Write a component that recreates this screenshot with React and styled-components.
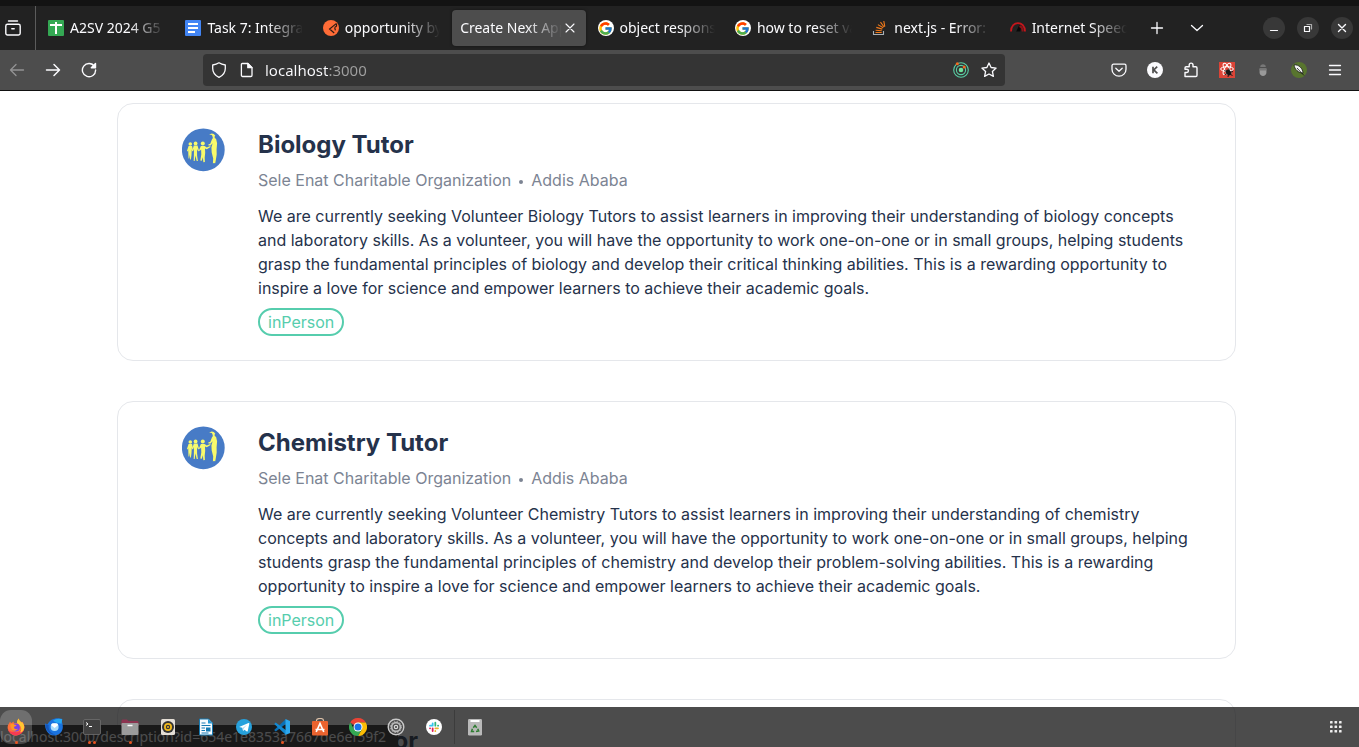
import React from "react";
import styled, { createGlobalStyle, css } from "styled-components";
import { FcGoogle } from "react-icons/fc";

const GlobalStyle = createGlobalStyle`
  *, *::before, *::after { box-sizing: border-box; }
  body { margin: 0; background: #fff; overflow: hidden; }
  button { border: 0; padding: 0; background: none; color: inherit; font: inherit; cursor: pointer; }
  h2, p, ul { margin: 0; padding: 0; }
  svg { display: block; flex: none; }
`;

const uiFont = `"Noto Sans", "Open Sans", sans-serif`;

/* ---------- window shell ---------- */

const Window = styled.div`
  position: relative;
  display: flex;
  flex-direction: column;
  height: 100vh;
  overflow: hidden;
  font-family: ${uiFont};
`;

const SystemBar = styled.div`
  flex: none;
  height: 6px;
  background: #131313;
`;

const TabStrip = styled.header`
  flex: none;
  display: flex;
  align-items: stretch;
  height: 44px;
  background: #222;
  color: #fbfbfe;
`;

const ViewButton = styled.button`
  width: 36px;
  padding-left: 5px;
  border-right: 1px solid #5c5c5c;
`;

const TabList = styled.div`
  flex: 1;
  min-width: 0;
  display: flex;
  padding-left: 2px;
`;

const Tab = styled.div`
  flex: 1 1 0;
  min-width: 0;
  display: flex;
  align-items: center;
  margin: 4px 2px;
  padding: 0 8px;
  border-radius: 4px;
  ${(p) => p.$active && css`
    background: #4d4d4d;
    box-shadow: 0 0 3px rgba(0, 0, 0, 0.5);
  `}
`;

const TabButton = styled.button`
  flex: 1;
  min-width: 0;
  display: flex;
  align-items: center;
  gap: 6px;
  font-size: 14px;
  line-height: 22px;
`;

const TabTitle = styled.span`
  flex: 1;
  min-width: 0;
  overflow: hidden;
  white-space: nowrap;
  text-align: left;
  mask-image: linear-gradient(to left, transparent, #000 36px);
`;

const StripAction = styled.button`
  display: grid;
  place-items: center;
  width: 40px;
`;

const WindowControls = styled.div`
  display: flex;
  align-items: center;
  gap: 12px;
  margin-left: 46px;
  padding-right: 6px;
`;

const WindowButton = styled.button`
  display: grid;
  place-items: center;
  width: 22px;
  height: 22px;
  border-radius: 50%;
  background: #383838;
`;

/* ---------- navigation bar ---------- */

const NavBar = styled.nav`
  flex: none;
  display: flex;
  align-items: center;
  height: 41px;
  background: #4d4d4d;
  border-bottom: 1px solid #111;
  color: #fbfbfe;
`;

const ToolGroup = styled.div`
  display: flex;
  gap: 2px;
  padding-right: ${(p) => (p.$end ? 7 : 0)}px;
`;

const ToolButton = styled.button`
  display: grid;
  place-items: center;
  width: 34px;
  height: 32px;
  opacity: ${(p) => (p.$dim ? 0.4 : 1)};
`;

const AddressBar = styled.div`
  flex: 1;
  min-width: 0;
  display: flex;
  align-items: center;
  height: 32px;
  margin: 0 97px;
  padding: 0 2px;
  border-radius: 4px;
  background: #343434;
`;

const AddressIcon = styled.button`
  display: grid;
  place-items: center;
  width: 28px;
  height: 28px;
`;

const AddressInput = styled.input`
  flex: 1;
  min-width: 0;
  border: 0;
  outline: 0;
  padding: 0 4px;
  font: 15px/22px ${uiFont};
  color: transparent;
  background: linear-gradient(to right, #fbfbfe 67px, #a0a0a0 67px);
  background-clip: text;
`;

/* ---------- page content ---------- */

const Page = styled.main`
  flex: 1;
  min-height: 0;
  overflow: hidden;
  display: flex;
  flex-direction: column;
  gap: 40px;
  padding: 12px 123px 0 117px;
  background: #fff;
  font-family: Inter, sans-serif;
  color: #25324b;
`;

const Card = styled.article`
  flex: none;
  display: flex;
  align-items: flex-start;
  gap: 32px;
  padding: 24px 36px 24px 64px;
  border: 1px solid #e5e7eb;
  border-radius: 16px;
`;

const CardBody = styled.div`
  flex: 1;
  min-width: 0;
`;

const Title = styled.h2`
  font-size: 24px;
  line-height: 34px;
  font-weight: 700;
`;

const Meta = styled.div`
  display: flex;
  align-items: center;
  gap: 8px;
  margin-top: 6px;
  font-size: 16px;
  line-height: 24px;
  color: #7c8493;
`;

const Dot = styled.span`
  width: 4px;
  height: 4px;
  margin-top: 4px;
  border-radius: 50%;
  background: #7c8493;
`;

const Description = styled.p`
  margin-top: 12px;
  font-size: 16px;
  line-height: 24px;
`;

const Badge = styled.span`
  display: block;
  width: fit-content;
  margin-top: 8px;
  padding: 0 8px;
  border: 2px solid #56cdad;
  border-radius: 14px;
  font-size: 16px;
  line-height: 24px;
  color: #56cdad;
`;

/* ---------- link status and dock, both over the page ---------- */

const LinkStatus = styled.div`
  position: absolute;
  left: 0;
  bottom: 0;
  height: 22px;
  padding-right: 12px;
  border-top-right-radius: 4px;
  background: #2b2b2b;
  color: #fbfbfe;
  font-size: 14px;
  line-height: 24px;
  white-space: nowrap;
`;

const Dock = styled.footer`
  position: absolute;
  inset: auto 0 0 0;
  display: flex;
  align-items: center;
  height: 40px;
  background: rgba(20, 20, 20, 0.76);
`;

const DockGroup = styled.div`
  display: flex;
  gap: 6px;
`;

const TrashGroup = styled.div`
  margin-left: 4px;
  padding-left: 4px;
  border-left: 1px solid #3c3c3c;
`;

const DockItem = styled.button`
  position: relative;
  display: grid;
  place-items: center;
  width: 32px;
  height: 34px;
  border-radius: 11px;
  background: ${(p) => (p.$focused ? "rgba(255,255,255,.2)" : "none")};
`;

const Running = styled.span`
  position: absolute;
  inset: auto 0 0 0;
  display: flex;
  justify-content: center;
  gap: 2px;
`;

const RunningDot = styled.i`
  width: 3px;
  height: 3px;
  border-radius: 50%;
  background: #e95420;
`;

const AppsButton = styled.button`
  display: grid;
  place-items: center;
  width: 32px;
  height: 34px;
  margin-left: auto;
  margin-right: 7px;
`;

/* ---------- icons ---------- */

const Line = ({ size = 16, w = 1.3, children }) => (
  <svg width={size} height={size} viewBox="0 0 16 16" fill="none" stroke="currentColor"
    strokeWidth={w} strokeLinecap="round" strokeLinejoin="round" aria-hidden="true">
    {children}
  </svg>
);

const Art = ({ size = 16, box = 16, children }) => (
  <svg width={size} height={size} viewBox={`0 0 ${box} ${box}`} aria-hidden="true">{children}</svg>
);

const SheetsIcon = () => (
  <Art><rect width="16" height="16" rx="1" fill="#34a853" />
    <path d="M2 5h12M8 2v12" stroke="#fff" strokeWidth="2" /></Art>
);
const DocsIcon = () => (
  <Art><rect width="16" height="16" rx="1" fill="#4285f4" />
    <path d="M3 4h10M3 8h10M3 12h7" stroke="#fff" strokeWidth="2" /></Art>
);
const PostmanIcon = () => (
  <Art>
    <circle cx="8" cy="8" r="8" fill="#ff6c37" />
    <path d="M13.2 3.6L6.6 9l4.6 4M11.8 7.2c1.6-.2 2.4-1.600 1.400-3.600M11.600 7.400l.8 3" fill="none" stroke="#2b1a14" strokeWidth="1.200" />
  </Art>
);
const GoogleBadge = styled.span`
  display: grid;
  place-items: center;
  flex: none;
  width: 16px;
  height: 16px;
  border-radius: 50%;
  background: #fff;
`;
const GoogleIcon = () => <GoogleBadge><FcGoogle size={15} /></GoogleBadge>;
const StackIcon = () => (
  <Art>
    <path d="M1.500 11v3.500h10V11" fill="none" stroke="#a9b0b5" strokeWidth="1.100" />
    <path d="M3.500 12.500h6.200M3.600 10.200l6.200.6M4.300 7.400l6 1.700M5.900 4.600l5.300 3.200M8.500 2.200l3.600 4.800M11.800 1l1 5.600" stroke="#f27a1a" strokeWidth="1.100" />
  </Art>
);
const SpeedIcon = () => (
  <Art>
    <path d="M1 11.500C1 .3 15 .3 15 11.500" fill="none" stroke="#c4161c" strokeWidth="1.800" />
    <path d="M6.200 11.600L9.400 4.800l1.500.6-.5 6.200z" fill="#080808" />
    <path d="M9.500 6c2.200.8 3.200 3 3.200 5.500" fill="none" stroke="#8d1216" strokeWidth="2" />
  </Art>
);

const ReactToolsIcon = () => (
  <Art>
    <g fill="none" stroke="#58cfa4" strokeWidth="1.100"><circle cx="8" cy="8" r="7.300" /><circle cx="8" cy="8" r="4.600" /></g>
    <circle cx="8" cy="8" r="2.300" fill="#6fe39c" />
    <circle cx="4.300" cy="1.700" r="1.500" fill="#f36b21" /><circle cx="11.200" cy="5" r="1.500" fill="#f36b21" />
  </Art>
);
const AccountIcon = () => (
  <Art><circle cx="8" cy="8" r="8" fill="#fbfbfe" />
    <path d="M6 4.700v6.600M10.200 4.700L6.800 8l3.600 3.300" stroke="#4d4d4d" strokeWidth="1.700" fill="none" /></Art>
);
const BugIcon = () => (
  <Art>
    <rect width="16" height="16" fill="#dc4437" />
    <g fill="none" stroke="#fff" strokeWidth="1">
      <ellipse cx="8" cy="7" rx="6.400" ry="2.300" />
      <ellipse cx="8" cy="7" rx="6.400" ry="2.300" transform="rotate(60 8 7)" />
      <ellipse cx="8" cy="7" rx="6.400" ry="2.300" transform="rotate(120 8 7)" />
    </g>
    <ellipse cx="9.600" cy="10.500" rx="2.300" ry="3.300" fill="#171717" transform="rotate(-38 9.600 10.500)" />
    <path d="M5.500 8.500l3 1.500M5.500 13l3-1.800M10 6.500v3M14 9.500l-3 .8M13.500 14l-2-2M9 15l.5-3" stroke="#171717" strokeWidth="1" />
  </Art>
);
const AcornIcon = () => (
  <Art><path d="M5.200 5C5 1.200 11 1.200 10.800 5z" fill="#777" />
    <path d="M4.600 6.500h6.800v4c0 4.600-6.800 4.600-6.800 0z" fill="#999" /><path d="M4.600 6.500h6.800v2H4.600z" fill="#777" /></Art>
);
const FeatherIcon = () => (
  <Art><circle cx="8" cy="8" r="8" fill="#58752e" />
    <path d="M3 2.800C8 2.600 11.600 6 12 11.200 7.400 10.800 3.600 7.600 3 2.800z" fill="#f2f2f2" stroke="#151515" strokeWidth=".8" />
    <path d="M6 6l7 7.500" stroke="#151515" strokeWidth=".8" /></Art>
);

const OrganisationLogo = () => (
  <svg width="44" height="44" viewBox="0 0 44 44" role="img" aria-label="Sele Enat logo">
    <circle cx="21.300" cy="21.800" r="21.400" fill="#477bc6" />
    <g fill="#f8fa6b">
      <circle cx="8.300" cy="16" r="1.800" />
      <path d="M6.600 18h3.400l1.200 4.800-.8.800-.6-2-.3 5.600-.6 4.200h-.8l-.2-4.600-.6 3.800-.8-.1-.2-5.800-.1-2.400-.7 1.200-.6-.6z" />
      <circle cx="13.600" cy="15.400" r="1.900" />
      <path d="M11.800 17.600h3.700l1.500 5-.8 1-1.200-2.600.1 6.800.8 5.200h-1.200l-1.300-5.500-.7 5.500h-1l.2-7 .1-5-1 2.200-.7-.6z" />
      <circle cx="20.800" cy="15.600" r="2" />
      <path d="M18.900 18h3.700l2.200 1.600 3.400-1.500.4.800-3.800 2.300-1.800-.7.2 4.300-.5 4.600.2 4.600-1.500.2-.6-5-1 3.600-1.500-.3 1-6-.2-5.100-1.400 1.600-.7-.7z" />
      <path d="M27.100 6.400l2.700-1 2 .6 1.500 1.700-.7.800.2 1.500 1.300 1.100 1 4.200-.5 6 .1 5.300-1 6.200-.5 2.500-1.400-.3-.9.500.3-5-1.500-6-.3-5 1.200-4.300-2 2.200-2.100.2-.2-1.100 2-.8 1.600-4.200 1-1.400-.5-2-.6-1.100z" />
    </g>
  </svg>
);

const FirefoxIcon = () => (
  <Art size={18} box={18}>
    <path d="M2.200 5.200L3 3.600l1.200 1.700L6.600 3.500l.3 1.700L10 5c-.3-2 .7-3.500 1.800-4.600.3 2 1.500 2.600 2.600 4L15 3.800c1.800 2 2.600 4 2.300 6.400A8.400 8.400 0 0 1 .7 10.400c-.3-2 .4-3.900 1.500-5.200z" fill="#ff7139" />
    <path d="M.7 10.400c1 2.400 3.400 3.800 6.200 3.400 3 1 6.800 0 8-3.600.6-2.200 0-4-1.300-5.200l.8-.6.6-.6c1.800 2 2.600 4 2.300 6.400A8.400 8.400 0 0 1 .7 10.400z" fill="#f63a53" />
    <path d="M10 5c-.3-2 .7-3.500 1.800-4.600.3 2 1.500 2.600 2.600 4L15 3.800c2.200 2.500 2.800 5.200 1.800 7.700-.8 2-2.500 3-3.800 3 1.800-2.400 1.700-5.300-.5-7.200z" fill="#ffc832" />
    <circle cx="8.800" cy="9.500" r="4" fill="#7b41e8" />
    <path d="M3.500 6.200c2-.8 3.400-.2 4 .6l2 .2c-.2 1.200-1.600 1.200-2.500 2 0 2.200 2.600 2.800 4 1.600-1 2.500-4.800 3-6.300.6-1-1.700-1.600-3.600-1.200-5z" fill="#ff9826" />
  </Art>
);
const ThunderbirdIcon = () => (
  <Art size={18} box={18}>
    <path d="M.2 5.500l2.400.8C5 1 11-1 17.600 1l-1.200 1.600c2 4 2 8.600-.6 12-3 3.600-9.300 3.800-12.600.3C.8 12.400-.2 9 .2 5.500z" fill="#1a73df" />
    <path d="M17.200 1.200c-3.600-1.200-7-.4-9.200 1.500l3.500 2 5 1z" fill="#24a8f5" />
    <path d="M.8 6C0 11 4 17.500 11 16.600 6 16 3 12 3.600 7z" fill="#1656b8" />
    <circle cx="9.600" cy="9" r="4" fill="#a9dcfb" /><path d="M6 7l3.600 3L13.200 7l-1-1.600H7z" fill="#fff" />
  </Art>
);
const TerminalIcon = () => (
  <Art size={18} box={18}>
    <rect x=".5" y="1.500" width="17" height="15" rx="1.500" fill="#404040" stroke="#6e6e6e" strokeWidth=".8" />
    <path d="M3 4.500l2 1.500-2 1.500M6 8.500h3" stroke="#fff" fill="none" />
  </Art>
);
const FilesIcon = () => (
  <Art size={18} box={18}>
    <path d="M.5 3.500C.5 2 1 1.500 2 1.500h4L7.500 3H16c1 0 1.500.5 1.500 1.500V8H.5z" fill="#8c3450" />
    <rect x=".5" y="5" width="17" height="12" rx="1" fill="#9b9b9b" /><path d="M6.500 7.500h5" stroke="#fff" strokeWidth="1.500" />
  </Art>
);
const SpeakerIcon = () => (
  <Art size={18} box={18}>
    <rect x="2" y="1" width="14" height="16" rx="1.500" fill="#e4ded5" />
    <circle cx="9" cy="9" r="6" fill="#333" /><circle cx="9" cy="9" r="4" fill="#f0b91d" /><circle cx="9" cy="9" r="2.200" fill="#333" /><circle cx="9" cy="9" r="1" fill="#f0b91d" />
  </Art>
);
const WriterIcon = () => (
  <Art size={18} box={18}>
    <path d="M2.500 1h9l4 4v12h-13z" fill="#f7fbfe" stroke="#167ab2" strokeWidth="1" /><path d="M11 1v4.500h4.500z" fill="#2496d2" />
    <path d="M4.500 5h4M4.500 7.500h9M4.500 10h3.500M4.500 12.500h3.500M4.500 15h7" stroke="#167ab2" strokeWidth="1.200" /><rect x="9" y="9.500" width="4.500" height="4" fill="#167ab2" />
  </Art>
);
const TelegramIcon = () => (
  <Art size={16} box={18}>
    <circle cx="9" cy="9" r="9" fill="#27a1dc" />
    <path d="M3.500 8.900l10.600-4.300c.6-.2 1 .2.900.8l-1.800 8.200c-.1.600-.6.700-1 .4l-2.800-2-1.500 1.400-.8-3.500z" fill="#fff" /><path d="M7.500 10l5-3.600-4 4.200-.5 2.500z" fill="#a7cfe9" />
  </Art>
);
const CodeIcon = () => (
  <Art size={18} box={18}>
    <path d="M13 1v4.800L2.800 13.400 1.200 11.900z" fill="#0a71b8" />
    <path d="M13 17v-4.800L2.800 4.600 1.200 6.100z" fill="#1389d1" />
    <path d="M12.500 1L17 3v12l-4.500 2z" fill="#2ca8ee" />
  </Art>
);
const SoftwareIcon = () => (
  <Art size={18} box={18}>
    <path d="M5.500 5V2.500C5.500-.2 12.500-.2 12.500 2.500V5" fill="none" stroke="#ddc1a8" strokeWidth="1.200" />
    <rect x="1" y="3" width="16" height="14.500" rx="1" fill="#ea632f" />
    <path d="M5.200 14L9 5.500l3.800 8.500M4.500 11.500h9" stroke="#fff" strokeWidth="1.700" fill="none" />
  </Art>
);
const ChromeIcon = () => (
  <Art size={18} box={18}>
    <path d="M9 9L1.200 4.500A9 9 0 0 1 16.800 4.500H9z" fill="#ea4335" />
    <path d="M9 9V4.500h7.800A9 9 0 0 1 9 18l3.900-6.800z" fill="#fbbc04" />
    <path d="M9 9l3.900 2.200L9 18A9 9 0 0 1 1.200 4.500l3.900 6.700z" fill="#34a853" />
    <circle cx="9" cy="9" r="4.500" fill="#fff" /><circle cx="9" cy="9" r="3.500" fill="#1a73e8" />
  </Art>
);
const SettingsIcon = () => (
  <Art size={18} box={18}>
    <circle cx="9" cy="9" r="7.800" fill="#4a4a4a" stroke="#c9c9c9" strokeWidth="1.400" />
    <circle cx="9" cy="9" r="4.400" fill="none" stroke="#b9b9b9" strokeWidth="1.800" />
    <circle cx="9" cy="9" r="5.500" fill="none" stroke="#b9b9b9" strokeDasharray="1.400 1.480" />
    <circle cx="9" cy="9" r="1.700" fill="none" stroke="#d8d8d8" strokeWidth="1.200" />
  </Art>
);
const SlackIcon = () => (
  <Art size={16} box={18}>
    <circle cx="9" cy="9" r="9" fill="#fff" />
    <g strokeWidth="2" strokeLinecap="round">
      <path d="M7.500 4.800v2.700M4.500 7.500h3" stroke="#36c5f0" /><path d="M10.500 4v3.500M13.500 7.500h.2" stroke="#2eb67d" />
      <path d="M10.500 10.500h3M10.500 13.500v.2" stroke="#ecb22e" /><path d="M7.500 10.500v3M4.500 10.500h.1" stroke="#e01e5a" />
    </g>
  </Art>
);
const TrashIcon = () => (
  <Art size={18} box={18}>
    <rect x="2" y="1" width="14" height="16.500" rx="1.200" fill="#b9b9b9" /><path d="M4.500 3h9" stroke="#fff" strokeWidth="2" />
    <path d="M7.300 9.800L9 7.600l1.700 2.200M11.700 10.700l1 2.300-2.700.6M8.200 13.600H5.500l.9-2.900" fill="none" stroke="#2f7d32" strokeWidth="1.500" />
  </Art>
);

/* ---------- data ---------- */

const tabs = [
  { title: "A2SV 2024 G5 Main", icon: SheetsIcon },
  { title: "Task 7: Integrate API", icon: DocsIcon },
  { title: "opportunity by id", icon: PostmanIcon },
  { title: "Create Next App", active: true },
  { title: "object response", icon: GoogleIcon },
  { title: "how to reset value", icon: GoogleIcon },
  { title: "next.js - Error: x", icon: StackIcon },
  { title: "Internet Speed Test", icon: SpeedIcon },
];

const jobs = [
  {
    title: "Biology Tutor",
    text: "We are currently seeking Volunteer Biology Tutors to assist learners in improving their understanding of biology concepts and laboratory skills. As a volunteer, you will have the opportunity to work one-on-one or in small groups, helping students grasp the fundamental principles of biology and develop their critical thinking abilities. This is a rewarding opportunity to inspire a love for science and empower learners to achieve their academic goals.",
  },
  {
    title: "Chemistry Tutor",
    text: "We are currently seeking Volunteer Chemistry Tutors to assist learners in improving their understanding of chemistry concepts and laboratory skills. As a volunteer, you will have the opportunity to work one-on-one or in small groups, helping students grasp the fundamental principles of chemistry and develop their problem-solving abilities. This is a rewarding opportunity to inspire a love for science and empower learners to achieve their academic goals.",
  },
];

const dockApps = [
  { name: "Firefox", icon: FirefoxIcon, windows: 1, focused: true },
  { name: "Thunderbird", icon: ThunderbirdIcon },
  { name: "Terminal", icon: TerminalIcon, windows: 2 },
  { name: "Files", icon: FilesIcon, windows: 1 },
  { name: "Rhythmbox", icon: SpeakerIcon },
  { name: "Writer", icon: WriterIcon },
  { name: "Telegram", icon: TelegramIcon },
  { name: "Visual Studio Code", icon: CodeIcon, windows: 1 },
  { name: "Software", icon: SoftwareIcon },
  { name: "Chrome", icon: ChromeIcon },
  { name: "Settings", icon: SettingsIcon },
  { name: "Slack", icon: SlackIcon },
];

/* ---------- parts ---------- */

function BrowserTabs() {
  return (
    <TabStrip>
      <ViewButton aria-label="Firefox View">
        <Line w={1.4}><path d="M3.500 1h9M2.500 4.300h11a1.700 1.700 0 0 1 1.700 1.700v7.300a1.700 1.700 0 0 1-1.700 1.700h-11a1.700 1.700 0 0 1-1.700-1.700V6a1.700 1.700 0 0 1 1.700-1.700zM6.800 8.800h2.400" /></Line>
      </ViewButton>
      <TabList>
        {tabs.map(({ title, icon: Icon, active }) => (
          <Tab key={title} $active={active}>
            <TabButton>
              {Icon && <Icon />}
              <TabTitle>{title}</TabTitle>
            </TabButton>
            {active && (
              <button aria-label="Close tab">
                <Line w={1.1}><path d="M4 4l8 8M12 4l-8 8" /></Line>
              </button>
            )}
          </Tab>
        ))}
      </TabList>
      <StripAction aria-label="New tab"><Line><path d="M8 2.500v11M2.500 8h11" /></Line></StripAction>
      <StripAction aria-label="List all tabs"><Line><path d="M2.500 5.500L8 10.500l5.500-5" /></Line></StripAction>
      <WindowControls>
        <WindowButton aria-label="Minimize"><Line w={1.2}><path d="M4.500 10.500h7" /></Line></WindowButton>
        <WindowButton aria-label="Restore"><Line w={1.2}><path d="M4.500 6.500h5v5h-5z" /><path d="M7 4.500h4.500V9" opacity=".6" /></Line></WindowButton>
        <WindowButton aria-label="Close window"><Line w={1.4}><path d="M4.500 4.500l7 7M11.500 4.500l-7 7" /></Line></WindowButton>
      </WindowControls>
    </TabStrip>
  );
}

function Navigation() {
  return (
    <NavBar>
      <ToolGroup>
        <ToolButton $dim aria-label="Back"><Line><path d="M14.500 8h-13M7 2.500L1.500 8 7 13.500" /></Line></ToolButton>
        <ToolButton aria-label="Forward"><Line w={1.5}><path d="M1.500 8h13M9 2.500L14.500 8 9 13.500" /></Line></ToolButton>
        <ToolButton aria-label="Reload"><Line w={1.4}><path d="M13.500 4.500A6.600 6.600 0 1 0 14.600 8" /><path d="M14.500 1.500v4.200h-4.200z" fill="currentColor" /></Line></ToolButton>
      </ToolGroup>
      <AddressBar>
        <AddressIcon aria-label="Tracking protection"><Line><path d="M8 .8C6.200 2 4 2.700 1.700 3v3.500c0 4 2.400 7 6.300 8.800 3.900-1.800 6.300-4.800 6.300-8.800V3C12 2.700 9.800 2 8 .8z" /></Line></AddressIcon>
        <AddressIcon aria-label="Site information"><Line><path d="M3.200 1.500h5.600l4.200 4.200v7.600a1.200 1.200 0 0 1-1.200 1.200H3.600a1.200 1.200 0 0 1-1.200-1.200V2.300a.8.800 0 0 1 .8-.8z" /><path d="M8.800 1.500v4.200H13z" fill="currentColor" /></Line></AddressIcon>
        <AddressInput aria-label="Address" defaultValue="localhost:3000" />
        <AddressIcon aria-label="Developer tools"><ReactToolsIcon /></AddressIcon>
        <AddressIcon aria-label="Bookmark"><Line><path d="M8 1l2.100 4.500 5 .6-3.700 3.400 1 4.900L8 12l-4.400 2.400 1-4.900L.9 6.100l5-.6z" /></Line></AddressIcon>
      </AddressBar>
      <ToolGroup $end>
        <ToolButton aria-label="Pocket"><Line><path d="M2.500 2.200h11a1.500 1.500 0 0 1 1.500 1.500v3.500a7 7 0 0 1-14 0V3.700a1.500 1.500 0 0 1 1.500-1.500z" /><path d="M4.800 6.200L8 9.200l3.200-3" /></Line></ToolButton>
        <ToolButton aria-label="Account"><AccountIcon /></ToolButton>
        <ToolButton aria-label="Extensions"><Line w={1.4}><path d="M2 14.500v-4h1.800a1.600 1.600 0 0 0 0-3.300H2V6a1.200 1.200 0 0 1 1.200-1.200h3V3a1.900 1.900 0 0 1 3.800 0v1.800h2.800A1.200 1.200 0 0 1 14 6v7.300a1.200 1.200 0 0 1-1.200 1.200z" /></Line></ToolButton>
        <ToolButton aria-label="React debugger"><BugIcon /></ToolButton>
        <ToolButton aria-label="Acorn"><AcornIcon /></ToolButton>
        <ToolButton aria-label="Feather"><FeatherIcon /></ToolButton>
        <ToolButton aria-label="Menu"><Line><path d="M2.500 3.500h11M2.500 8h11M2.500 12.500h11" /></Line></ToolButton>
      </ToolGroup>
    </NavBar>
  );
}

function JobCard({ title, text }) {
  return (
    <Card>
      <OrganisationLogo />
      <CardBody>
        <Title>{title}</Title>
        <Meta>
          <span>Sele Enat Charitable Organization</span>
          <Dot />
          <span>Addis Ababa</span>
        </Meta>
        {text && <Description>{text}</Description>}
        <Badge>inPerson</Badge>
      </CardBody>
    </Card>
  );
}

export default function App() {
  return (
    <Window>
      <GlobalStyle />
      <SystemBar />
      <BrowserTabs />
      <Navigation />
      <Page>
        {jobs.map((job) => <JobCard key={job.title} {...job} />)}
        <JobCard title="Physics Tutor" />
      </Page>
      <LinkStatus>localhost:3000/description?id=654e1e8353a7667de6ef59f2</LinkStatus>
      <Dock>
        <DockGroup>
          {dockApps.map(({ name, icon: Icon, windows = 0, focused }) => (
            <DockItem key={name} aria-label={name} $focused={focused}>
              <Icon />
              <Running>{Array.from({ length: windows }, (_, n) => <RunningDot key={n} />)}</Running>
            </DockItem>
          ))}
        </DockGroup>
        <TrashGroup>
          <DockItem aria-label="Trash"><TrashIcon /></DockItem>
        </TrashGroup>
        <AppsButton aria-label="Show applications">
          <Art size={12} box={12}>
            {[0, 4.5, 9].map((y) => [0, 4.5, 9].map((x) => (
              <rect key={`${x}-${y}`} x={x} y={y} width="2.6" height="2.6" rx=".6" fill="#eee" />
            )))}
          </Art>
        </AppsButton>
      </Dock>
    </Window>
  );
}
